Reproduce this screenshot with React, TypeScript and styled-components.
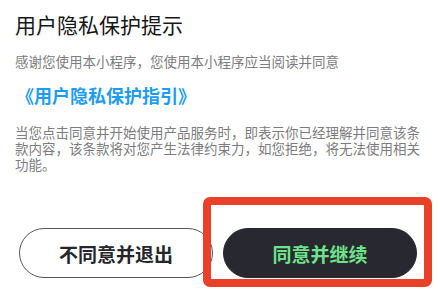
import React from 'react';
import styled, { createGlobalStyle } from 'styled-components';

const GlobalStyle = createGlobalStyle`
  html, body {
    margin: 0;
    padding: 0;
    background: #ffffff;
  }
  body {
    font-family: "Noto Sans CJK SC", "Noto Sans", sans-serif;
  }
`;

const Page = styled.div`
  position: relative;
  width: 440px;
  height: 289px;
  overflow: hidden;
  box-sizing: border-box;
  padding: 10px 19px 0 15px;
  display: flex;
  flex-direction: column;
`;

const Title = styled.h1`
  margin: 0;
  font-size: 21px;
  line-height: 28px;
  font-weight: 400;
  color: #161616;
`;

const Intro = styled.p`
  margin: 14px 0 0;
  font-size: 13.5px;
  line-height: 18px;
  color: #7c7c80;
`;

const GuideLink = styled.a`
  margin-top: 13px;
  margin-left: 1px;
  font-size: 18px;
  line-height: 24px;
  font-weight: 700;
  color: #1d9cf0;
  text-decoration: none;
  cursor: pointer;
`;

const Terms = styled.p`
  margin: 17px 0 0;
  font-size: 13.5px;
  line-height: 16px;
  color: #7c7c80;
`;

const Actions = styled.div`
  margin-top: 56px;
  padding: 0 0 0 4px;
  display: flex;
  gap: 10px;
`;

const Button = styled.button<{ $primary?: boolean }>`
  width: 194px;
  height: 50px;
  border-radius: 25px;
  box-sizing: border-box;
  border: 1px solid ${(p) => (p.$primary ? '#272830' : '#55565b')};
  background: ${(p) => (p.$primary ? '#272830' : '#ffffff')};
  color: ${(p) => (p.$primary ? '#6ee38a' : '#26272c')};
  font-family: "Noto Sans CJK SC", "Noto Sans", sans-serif;
  font-size: 19px;
  font-weight: 700;
  cursor: pointer;
  padding: 0;
`;

const Highlight = styled.div`
  position: absolute;
  left: 203px;
  top: 197px;
  width: 229px;
  height: 90px;
  box-sizing: border-box;
  border: 8px solid #e9402a;
  border-radius: 7px;
  pointer-events: none;
`;

export default function App() {
  return (
    <>
      <GlobalStyle />
      <Page>
        <Title>用户隐私保护提示</Title>
        <Intro>感谢您使用本小程序，您使用本小程序应当阅读并同意</Intro>
        <GuideLink>《用户隐私保护指引》</GuideLink>
        <Terms>
          当您点击同意并开始使用产品服务时，即表示你已经理解并同意该条款内容，该条款将对您产生法律约束力，如您拒绝，将无法使用相关功能。
        </Terms>
        <Actions>
          <Button>不同意并退出</Button>
          <Button $primary>同意并继续</Button>
        </Actions>
        <Highlight />
      </Page>
    </>
  );
}
